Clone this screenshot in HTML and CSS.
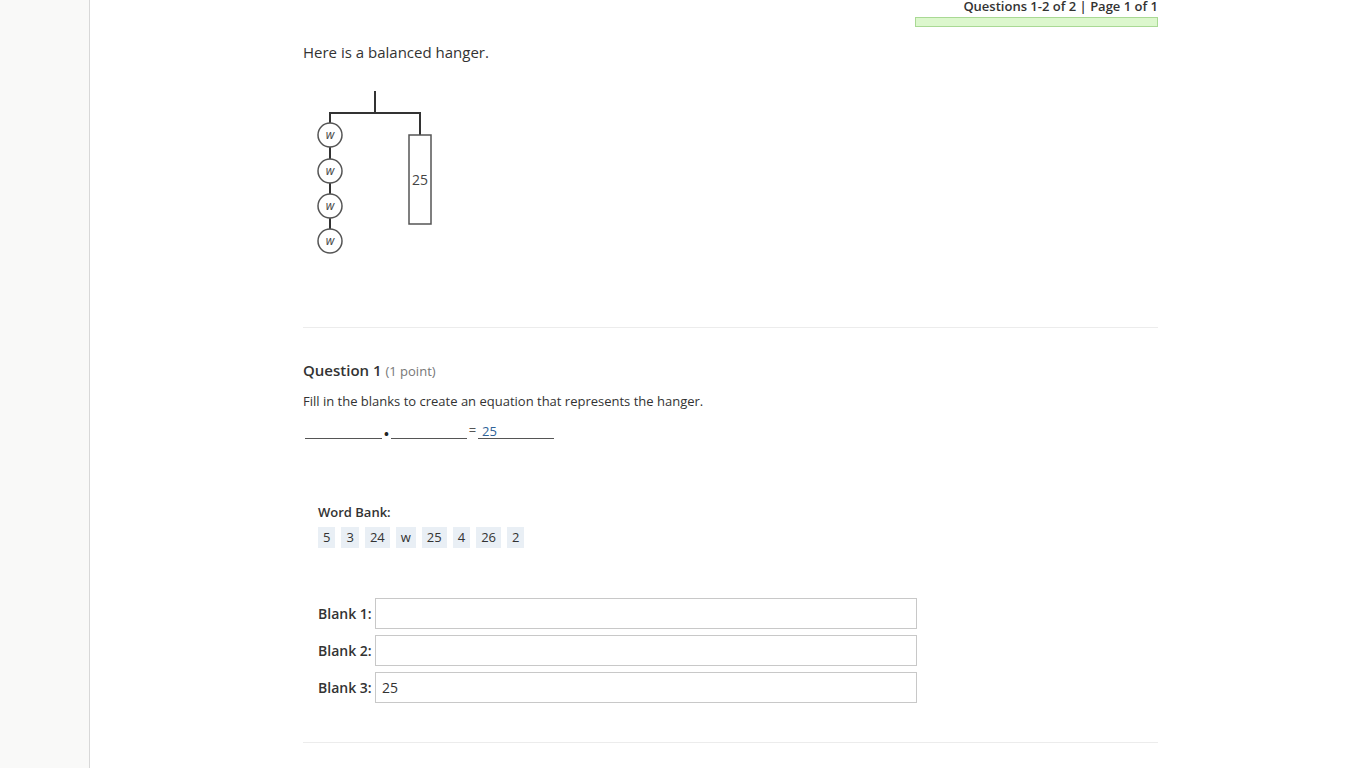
FILE: index.html
```html
<!DOCTYPE html>
<html>
<head>
<meta charset="utf-8">
<link rel="stylesheet" href="styles.css">
</head>
<body>
<div class="page">
  <aside class="sidebar"></aside>
  <main class="main">
    <div class="column">
      <div class="status">
        <div class="status-text">Questions 1-2 of 2 | Page 1 of 1</div>
        <div class="progress"></div>
      </div>
      <p class="intro">Here is a balanced hanger.</p>
      <svg class="hanger" width="140" height="172" viewBox="0 0 140 172">
        <g fill="none" stroke="#333" stroke-width="2">
          <line x1="72" y1="3" x2="72" y2="25"/>
          <line x1="26" y1="25" x2="118" y2="25"/>
          <line x1="27" y1="25" x2="27" y2="153"/>
          <line x1="117" y1="25" x2="117" y2="47"/>
        </g>
        <g fill="#fff" stroke="#555" stroke-width="1.5">
          <circle cx="27" cy="47" r="12"/>
          <circle cx="27" cy="83" r="12"/>
          <circle cx="27" cy="118" r="12"/>
          <circle cx="27" cy="153" r="12"/>
          <rect x="106" y="47" width="22" height="89"/>
        </g>
        <g class="hg-text" fill="#444" text-anchor="middle">
          <text x="27" y="51" font-style="italic">w</text>
          <text x="27" y="87" font-style="italic">w</text>
          <text x="27" y="122" font-style="italic">w</text>
          <text x="27" y="157" font-style="italic">w</text>
          <text x="117" y="97" class="num">25</text>
        </g>
      </svg>
      <hr class="sep">
      <section class="question">
        <h2 class="q-title">Question 1 <span class="points">(1 point)</span></h2>
        <p class="prompt">Fill in the blanks to create an equation that represents the hanger.</p>
        <div class="equation">
          <span class="blank"></span><span class="dot">•</span><span class="blank b2"></span><span class="eq">=</span><span class="blank b3">25</span>
        </div>
        <div class="bank">
          <div class="bank-title">Word Bank:</div>
          <div class="tokens">
            <span class="token">5</span><span class="token">3</span><span class="token">24</span><span class="token">w</span><span class="token">25</span><span class="token">4</span><span class="token">26</span><span class="token">2</span>
          </div>
        </div>
        <div class="fields">
          <label class="field"><span class="field-label">Blank 1:</span><input class="field-input" type="text"></label>
          <label class="field"><span class="field-label">Blank 2:</span><input class="field-input" type="text"></label>
          <label class="field"><span class="field-label">Blank 3:</span><input class="field-input" type="text" value="25"></label>
        </div>
      </section>
      <hr class="sep sep2">
    </div>
  </main>
</div>
</body>
</html>
```
FILE: styles.css
```css
html, body {
  margin: 0;
  padding: 0;
  background: #fff;
  font-family: "Open Sans", "Liberation Sans", sans-serif;
  color: #333;
}
.page {
  display: flex;
  height: 768px;
  overflow: hidden;
}
.sidebar {
  width: 89px;
  flex: none;
  background: #f9f9f8;
  border-right: 1px solid #d8d8d8;
}
.main {
  flex: 1;
}
.column {
  margin-left: 213px;
  width: 855px;
}
.status {
  display: flex;
  flex-direction: column;
  align-items: flex-end;
}
.status-text {
  font-size: 13px;
  font-weight: 600;
  line-height: 13px;
  color: #333;
}
.progress {
  width: 241px;
  height: 8px;
  margin-top: 4px;
  background: #dcf7cd;
  border: 1px solid #a9d994;
}
.intro {
  margin: 15px 0 0 0;
  font-size: 15px;
  line-height: 20px;
}
.hanger {
  display: block;
  margin-top: 26px;
}
.hg-text text {
  font-family: "Open Sans", "Liberation Sans", sans-serif;
  font-size: 12px;
}
.hg-text .num {
  font-size: 14px;
  font-style: normal;
}
.sep {
  border: 0;
  border-top: 1px solid #ececec;
  margin: 67px 0 0 0;
}
.question {
  padding-top: 32px;
}
.q-title {
  margin: 0;
  font-size: 15px;
  font-weight: 600;
  line-height: 20px;
}
.points {
  font-size: 13px;
  font-weight: 400;
  color: #777;
}
.prompt {
  margin: 11px 0 0 0;
  font-size: 13px;
  line-height: 18px;
}
.equation {
  margin-top: 11px;
  display: flex;
  align-items: flex-end;
  height: 18px;
  padding-left: 2px;
  font-size: 13px;
}
.blank {
  display: inline-block;
  width: 77px;
  height: 16px;
  border-bottom: 1px solid #555;
  color: #2f6398;
  padding-left: 4px;
  box-sizing: border-box;
  line-height: 16px;
}
.dot {
  width: 9px;
  text-align: center;
  font-size: 13px;
  font-weight: 700;
  line-height: 9px;
  color: #222;
}
.b2 {
  width: 76px;
}
.eq {
  width: 11px;
  text-align: center;
  line-height: 18px;
  color: #555;
}
.b3 {
  width: 76px;
}
.bank {
  margin-top: 64px;
  padding-left: 15px;
}
.bank-title {
  font-size: 13px;
  font-weight: 600;
  line-height: 18px;
}
.tokens {
  display: flex;
  gap: 6px;
  margin-top: 6px;
}
.token {
  display: inline-block;
  background: #e9eff5;
  font-size: 13px;
  line-height: 21px;
  height: 21px;
  padding: 0 5px;
}
.fields {
  margin-top: 50px;
  padding-left: 15px;
  display: flex;
  flex-direction: column;
  gap: 6px;
}
.field {
  display: flex;
  align-items: center;
}
.field-label {
  width: 57px;
  font-size: 14px;
  font-weight: 600;
}
.field-input {
  width: 542px;
  height: 31px;
  box-sizing: border-box;
  border: 1px solid #c8c8c8;
  margin: 0;
  padding: 0 6px;
  font-family: "Open Sans", "Liberation Sans", sans-serif;
  font-size: 14px;
  color: #333;
  background: #fff;
}
.sep2 {
  margin-top: 39px;
}
```
